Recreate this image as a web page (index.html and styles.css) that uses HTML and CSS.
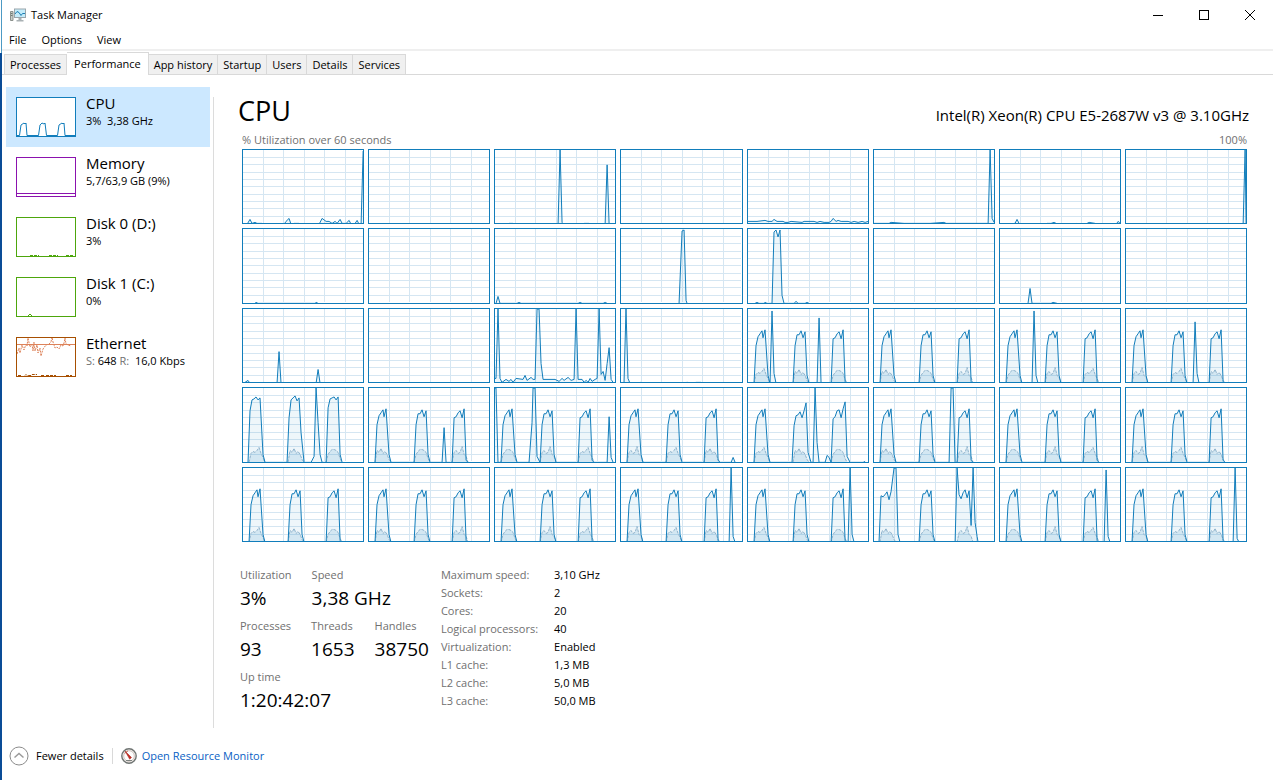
FILE: index.html
```html
<!DOCTYPE html>
<html lang="en">
<head>
<meta charset="utf-8">
<meta name="viewport" content="width=device-width, initial-scale=1">
<title>Task Manager</title>
<link rel="stylesheet" href="styles.css">
</head>
<body>
<div class="window">
  <header class="titlebar">
    <svg class="app-icon" viewBox="0 0 16 14" aria-hidden="true">
      <path d="M.5 3.500h2.500v9H.5z" fill="#c9cdc9" stroke="#8b918c"/>
      <path d="M1 5.500h1.500M1 7.500h1.500" stroke="#6f7a72"/>
      <rect x="4.500" y="1" width="11" height="8.500" fill="#c4ecfa" stroke="#9aa5ab"/>
      <path d="M5 6l2-2.500 2 1 2 3 1.500-2H15" fill="none" stroke="#1c7fb4"/>
      <path d="M8.500 10h3v2h2v1.500h-7V12h2z" fill="#a9b1b4"/>
    </svg>
    <span class="app-title">Task Manager</span>
    <div class="window-buttons">
      <button type="button" aria-label="Minimize"><svg viewBox="0 0 12 12"><path d="M1 6.500h10"/></svg></button>
      <button type="button" aria-label="Maximize"><svg viewBox="0 0 12 12"><path d="M1.500 1.500h9v9h-9z"/></svg></button>
      <button type="button" aria-label="Close"><svg class="smooth" viewBox="0 0 12 12"><path d="M1 1l10 10M11 1L1 11"/></svg></button>
    </div>
  </header>
  <nav class="menubar" aria-label="Menu">
    <button type="button">File</button>
    <button type="button">Options</button>
    <button type="button">View</button>
  </nav>
  <div class="tabs" role="tablist">
    <button type="button" role="tab">Processes</button>
    <button type="button" role="tab" class="active" aria-selected="true">Performance</button>
    <button type="button" role="tab">App history</button>
    <button type="button" role="tab">Startup</button>
    <button type="button" role="tab">Users</button>
    <button type="button" role="tab">Details</button>
    <button type="button" role="tab">Services</button>
  </div>

  <div class="workspace">
    <aside class="resources">
      <button type="button" class="resource selected">
        <svg class="thumb cpu" viewBox="1 1 58 38" aria-hidden="true">
          <path class="line" d="M1 38.500H3.500L5 28l3-2 1 1 1-1 1 12.500H22.500L24 28l2-2 2 1 1-1 1.500 12.500H41.500L43 28l3-2 1 1 1-1 1 12.500H59"/>
        </svg>
        <span class="resource-text"><span class="resource-name">CPU</span><span class="resource-value">3%&nbsp; 3,38 GHz</span></span>
      </button>
      <button type="button" class="resource">
        <svg class="thumb memory" viewBox="1 1 58 38" aria-hidden="true"><path class="line" d="M1 36.500H59"/></svg>
        <span class="resource-text"><span class="resource-name">Memory</span><span class="resource-value">5,7/63,9 GB (9%)</span></span>
      </button>
      <button type="button" class="resource">
        <svg class="thumb disk" viewBox="1 1 58 38" aria-hidden="true"><path class="line" d="M14 38.500h9M33 38.500h9M50 38.500h8" stroke-dasharray="3 1"/></svg>
        <span class="resource-text"><span class="resource-name">Disk 0 (D:)</span><span class="resource-value">3%</span></span>
      </button>
      <button type="button" class="resource">
        <svg class="thumb disk" viewBox="1 1 58 38" aria-hidden="true"><path class="line" d="M12 39l2-2 2 2"/></svg>
        <span class="resource-text"><span class="resource-name">Disk 1 (C:)</span><span class="resource-value">0%</span></span>
      </button>
      <button type="button" class="resource">
        <svg class="thumb net" viewBox="1 1 58 38" aria-hidden="true">
          <path class="line" d="M1 7.500H59"/>
          <path class="line" stroke-dasharray="2 1" d="M1 17l2-6 1 5 2-8 2 5 2-6 1 2 1-8 2 9 2-3 1 7 1-9 1 9 2-6 1 8 2-5 1 8 2-7 3-4 3-1 2-2 1-5 1 5 2 6 2-1 2 2 2-4 2 1 1-3 1-5 1 6 2 1 3 1"/>
          <path class="base" d="M2 38.500h4M9 38.500l1-1 1 1h4l1-1h5M25 38.500h3M30 38.500h10M50 38.500h6" stroke-dasharray="3 1"/>
        </svg>
        <span class="resource-text"><span class="resource-name">Ethernet</span><span class="resource-value"><i>S:</i> 648 <i>R:</i>&nbsp; 16,0 Kbps</span></span>
      </button>
    </aside>

    <main class="detail">
      <div class="detail-head">
        <h1>CPU</h1>
        <p class="model">Intel(R) Xeon(R) CPU E5-2687W v3 @ 3.10GHz</p>
      </div>
      <div class="scale"><span>% Utilization over 60 seconds</span><span>100%</span></div>
      <div class="charts" id="charts"></div>

      <div class="stats">
        <div class="live">
          <dl class="live-row">
            <div><dt>Utilization</dt><dd>3%</dd></div>
            <div><dt>Speed</dt><dd>3,38 GHz</dd></div>
          </dl>
          <dl class="live-row">
            <div><dt>Processes</dt><dd>93</dd></div>
            <div><dt>Threads</dt><dd>1653</dd></div>
            <div><dt>Handles</dt><dd>38750</dd></div>
          </dl>
          <dl class="live-row">
            <div><dt>Up time</dt><dd>1:20:42:07</dd></div>
          </dl>
        </div>
        <dl class="specs">
          <dt>Maximum speed:</dt><dd>3,10 GHz</dd>
          <dt>Sockets:</dt><dd>2</dd>
          <dt>Cores:</dt><dd>20</dd>
          <dt>Logical processors:</dt><dd>40</dd>
          <dt>Virtualization:</dt><dd>Enabled</dd>
          <dt>L1 cache:</dt><dd>1,3 MB</dd>
          <dt>L2 cache:</dt><dd>5,0 MB</dd>
          <dt>L3 cache:</dt><dd>50,0 MB</dd>
        </dl>
      </div>
    </main>
  </div>

  <footer class="footer">
    <button type="button" class="fewer">
      <svg viewBox="0 0 20 20" aria-hidden="true"><circle cx="10" cy="10" r="9" fill="none" stroke="#8c8c8c"/><path d="M5.500 11.500L10 7.500l4.500 4" fill="none" stroke="#9a9a9a" stroke-width="1.500"/></svg>
      Fewer details
    </button>
    <a class="monitor" href="#monitor">
      <svg viewBox="0 0 16 16" aria-hidden="true">
        <circle cx="8" cy="8" r="7.200" fill="#f3f1ee" stroke="#6f7472" stroke-width="1.400"/>
        <circle cx="8" cy="8" r="5.300" fill="#fdfdfd" stroke="#c7b8b2" stroke-width=".8"/>
        <path d="M4 5.500A5 5 0 0 1 7 3" fill="none" stroke="#c8705f"/>
        <path d="M4 3l6.500 6.500-1.800 1.700z" fill="#c22a20" stroke="#a82018" stroke-width=".5"/>
        <path d="M5 12.500h6" stroke="#7d8380"/>
      </svg>
      Open Resource Monitor
    </a>
  </footer>
</div>
<script src="charts.js"></script>
</body>
</html>
```

FILE: styles.css
```css
* { box-sizing: border-box; }

body {
  margin: 0;
  background: #fff;
  color: #000;
  font: 11px/16px "Segoe UI", "Open Sans", "Noto Sans", sans-serif;
}

button {
  margin: 0;
  padding: 0;
  border: 0;
  background: none;
  color: inherit;
  font: inherit;
  text-align: left;
}

h1, p, dl, dt, dd { margin: 0; font-weight: 400; }

.window {
  display: flex;
  flex-direction: column;
  min-height: 100vh;
  padding-left: 2px;
  background:
    linear-gradient(#4d9ac4, #4d9ac4) 1px 0 / 1px 53px no-repeat,
    linear-gradient(#0a4c97, #0a4c97) 0 53px / 2px 100% no-repeat,
    #fff;
}

.titlebar {
  display: flex;
  align-items: center;
  gap: 5px;
  height: 30px;
  padding-left: 8px;
}

.app-icon { width: 16px; height: 14px; }

.window-buttons { display: flex; margin-left: auto; }

.window-buttons button {
  display: flex;
  align-items: center;
  justify-content: center;
  width: 46px;
  height: 28px;
}

.window-buttons svg {
  width: 12px;
  height: 12px;
  fill: none;
  stroke: #000;
  shape-rendering: crispEdges;
}

.window-buttons .smooth { shape-rendering: auto; }

.menubar {
  display: flex;
  gap: 15px;
  padding: 2px 7px 1px;
  border-bottom: 2px solid #efefef;
}

.tabs {
  display: flex;
  align-items: flex-end;
  height: 24px;
  padding-left: 2px;
  border-bottom: 1px solid #d9d9d9;
}

.tabs button {
  height: 20px;
  padding: 0 5px;
  border: 1px solid #d9d9d9;
  border-width: 1px 1px 0 0;
  background: #f0f0f0;
  line-height: 20px;
  white-space: nowrap;
}

.tabs button:first-child { border-left-width: 1px; }

.tabs .active {
  height: 23px;
  margin-bottom: -1px;
  padding: 0 7px;
  background: #fff;
}

.workspace {
  display: flex;
  flex: 1;
  padding-top: 12px;
}

.resources {
  flex: none;
  width: 212px;
  padding: 0 4px;
  background: linear-gradient(#dcdcdc, #dcdcdc) right 10px / 1px 100% no-repeat;
}

.resource {
  display: flex;
  gap: 10px;
  width: 100%;
  height: 60px;
  padding: 8px 10px;
}

.selected { background: #cce8ff; }

.thumb {
  flex: none;
  width: 60px;
  height: 40px;
  margin-top: 2px;
  border: 1px solid currentColor;
  background: #fff;
}

.thumb .line, .thumb .base { fill: none; stroke: currentColor; }
.cpu { color: #117dbb; }
.memory { color: #8b12ae; }
.disk { color: #4da60c; }
.net { color: #a74f01; }
.net .line { stroke: #dd8259; }

.resource-text { display: flex; flex-direction: column; gap: 2px; white-space: nowrap; }
.resource-name { font-size: 15px; line-height: 16px; }
.resource-value i { color: #707070; font-style: normal; }

.detail { flex: 1; min-width: 0; padding: 4px 24px 8px; }

.detail-head {
  display: flex;
  align-items: flex-end;
  justify-content: space-between;
  height: 40px;
}

h1 { font-size: 27px; line-height: 40px; }
.model { font-size: 15px; line-height: 32px; }

.scale {
  display: flex;
  justify-content: space-between;
  padding: 1px 2px 1px 4px;
  color: #707070;
}

.charts {
  display: grid;
  grid-template-columns: repeat(8, 1fr);
  gap: 4px;
  padding: 0 2px 0 4px;
}

.chart {
  display: block;
  width: 100%;
  aspect-ratio: 81 / 50;
  border: 1px solid #117dbb;
}

.chart path { vector-effect: non-scaling-stroke; }
.chart .grid { fill: none; stroke: #d5e6f2; shape-rendering: crispEdges; }
.chart .area { fill: #117dbb; fill-opacity: .07; }
.chart .trace { fill: none; stroke: #117dbb; }
.chart .kernel { fill: #117dbb; fill-opacity: .12; stroke: #8fb3cc; stroke-dasharray: 3 1; }

.stats { display: flex; gap: 12px; padding: 24px 0 0 2px; }
.stats dt { color: #707070; line-height: 18px; }
.live { display: flex; flex-direction: column; gap: 5px; }
.live-row { display: flex; gap: 20px; }
.live dd { font-size: 19px; line-height: 28px; }

.specs {
  display: grid;
  grid-template-columns: auto auto;
  column-gap: 16px;
  align-content: start;
  line-height: 18px;
}

.footer {
  display: flex;
  align-items: center;
  height: 52px;
  padding: 3px 7px 0;
}

.fewer { display: flex; align-items: center; gap: 7px; }
.fewer svg { width: 20px; height: 20px; }

.monitor {
  display: flex;
  align-items: center;
  gap: 5px;
  margin-left: 8px;
  padding-left: 8px;
  border-left: 1px solid #d9d9d9;
  color: #0a5fc4;
  text-decoration: none;
}

.monitor svg { width: 16px; height: 16px; }
```

FILE: charts.js
```js
// One trace per logical processor, left to right and top to bottom.
// Points are "x,height" inside a 120 x 74 plot; A, B and C are the three load bursts.
const bursts = {
  A: "6,0 8,38 10,47 12,50 14,53 15,46 17,54 20,8 22,0",
  B: "45,0 47,38 49,49 51,49 53,53 55,46 57,52 59,8 61,0",
  C: "83,0 85,45 87,46 89,50 91,52 93,45 95,54 97,2 99,0"
};

const traces = [
  "4,0 7,5 9,1 12,2 14,1 19,1 21,0 31,0 33,1 35,0 41,0 43,3 46,6 48,0 51,1 56,1 58,0 76,0 79,6 83,3 86,3 89,1 92,3 94,1 97,5 99,1 103,1 106,4 108,0 112,1 114,4 116,0 118,1 120,74",
  "",
  "12,0 14,1 18,1 20,0 63,0 65,75 67,2 69,0 88,0 89,1 94,1 95,0 110,0 112,60 114,0",
  "11,0 13,1 15,0",
  "0,3 9,3 17,4 20,3 24,3 26,5 29,3 35,3 37,2 40,2 43,3 54,2 56,3 66,3 69,2 72,3 76,2 81,2 83,3 85,6 88,3 90,4 93,3 100,3 103,2 106,3 110,2 114,3 117,2 120,3",
  "0,1 15,1 17,2 30,1 46,1 56,1 70,2 72,1 80,1 114,1 116,75 118,6 120,2",
  "6,0 8,1 11,0 14,1 15,1 17,5 19,1 20,0 45,0 47,1 51,1 54,2 58,0 74,0 76,1 79,0 85,0 87,1 89,2 95,1 97,0 116,0 118,3 120,1",
  "117,0 119,75 120,0",

  "12,0 13,1 15,0 72,0 73,1 75,0",
  "",
  "1,0 3,7 5,0 22,0 24,1 26,0 83,0 85,1 87,0 108,0 110,1 112,0",
  "58,0 61,73 63,74 65,3 66,0",
  "7,0 9,1 11,0 16,0 17,1 19,0 24,0 26,72 28,74 30,67 32,74 34,8 36,0 46,0 48,2 50,0 57,0 59,1 61,0",
  "",
  "28,0 30,15 32,0 51,0 53,1 57,0",
  "",

  "2,1 5,3 7,0 12,0 13,1 15,0 34,0 36,32 38,0 73,0 75,14 77,0",
  "",
  "0,5 1,5 3,75 5,5 7,1 11,4 14,2 16,4 18,1 21,5 28,4 30,8 32,3 36,6 38,4 40,4 42,75 44,75 46,20 48,4 60,4 64,2 67,5 69,3 73,6 76,3 79,4 81,75 83,4 87,4 89,1 91,3 93,1 95,5 97,2 100,4 102,5 104,75 106,9 108,12 110,3 112,20 114,36 116,4 118,1 120,0",
  "3,0 5,75 7,5 9,0 20,1 22,0 41,0 43,1 45,0 67,1 69,0 75,1 80,1 82,0",
  "A 24,73 26,10 28,0 B 69,0 71,66 73,0 C",
  "A B C",
  "A 28,1 32,0 34,73 36,8 38,0 B C",
  "A B 67,0 69,62 71,10 73,0 C 115,0 117,1",

  "5,0 7,52 9,63 11,64 13,66 15,63 17,65 20,8 22,0 44,0 46,45 48,63 50,65 52,67 54,62 56,65 58,30 61,0 68,0 71,6 73,75 75,40 77,8 79,0 83,0 85,55 87,64 89,65 91,66 93,63 95,66 97,8 99,0",
  "A B 73,0 75,35 77,0 C",
  "0,75 1,75 3,0 A 34,0 37,40 38,75 40,75 42,6 B C 112,0 114,46 116,5 118,0",
  "A B C 110,0 112,5 114,0",
  "A 44,0 46,37 48,47 50,48 52,51 54,45 56,52 58,60 60,10 63,0 65,0 67,75 69,20 71,0 77,0 79,7 81,5 83,0 85,44 87,46 89,52 91,53 93,45 95,54 97,61 99,6 102,0 115,0 117,1",
  "A B 75,0 77,75 79,75 81,0 C",
  "A B C",
  "A B C",

  "A B C",
  "A B C",
  "A B C",
  "A B C 108,0 110,75 112,6 114,0",
  "A B C 100,0 102,75 104,8 106,0",
  "5,0 7,47 9,46 11,48 13,51 15,43 17,51 20,75 22,75 24,8 26,0 B 81,0 83,75 85,48 87,44 89,50 91,53 93,45 95,52 97,17 99,75 101,20 103,6 104,0",
  "A B C 104,0 106,73 108,6 110,0",
  "0,1 3,0 A 40,0 42,1 B 79,0 81,1 C 107,0 109,75 111,4 113,0 117,1"
];

const kernelShapes = [
  [0, 9, 11, 10, 12, 15, 9, 5, 0],
  [0, 12, 10, 14, 9, 11, 8, 3, 0],
  [0, 8, 11, 13, 13, 12, 10, 4, 0],
  [0, 10, 12, 9, 10, 16, 8, 6, 0]
];

// Zero load lies on the frame, just below the plot area.
const BASE = 75;

const toPoints = text => text.split(" ").map(pair => pair.split(",").map(Number));

const toPath = points => points.map(([x, h], i) => (i ? "L" : "M") + x + " " + (BASE - h)).join("");

let gridPath = "";
for (let i = 1; i < 6; i++) gridPath += `M${i * 20.4} 0V74`;
for (let i = 1; i < 10; i++) gridPath += `M0 ${i * 7.4}H120`;

document.getElementById("charts").innerHTML = traces.map((trace, index) => {
  let body = `<path class="grid" d="${gridPath}"/>`;
  if (trace) {
    const text = trace.split(" ").map(token => bursts[token] || token).join(" ");
    const line = toPath(toPoints(text));
    const firstX = text.split(",")[0];
    const lastX = toPoints(text).at(-1)[0];
    body += `<path class="area" d="${line}L${lastX} ${BASE}L${firstX} ${BASE}Z"/>`;
    if (index >= 20) {
      body += [6, 45, 83].map((start, n) => {
        const shape = kernelShapes[(index + n) % kernelShapes.length];
        return `<path class="kernel" d="${toPath(shape.map((h, i) => [start + i * 2, h]))}"/>`;
      }).join("");
    }
    body += `<path class="trace" d="${line}"/>`;
  }
  return `<svg class="chart" viewBox="0 0 120 74" preserveAspectRatio="none" role="img" aria-label="CPU ${index}">${body}</svg>`;
}).join("");
```
